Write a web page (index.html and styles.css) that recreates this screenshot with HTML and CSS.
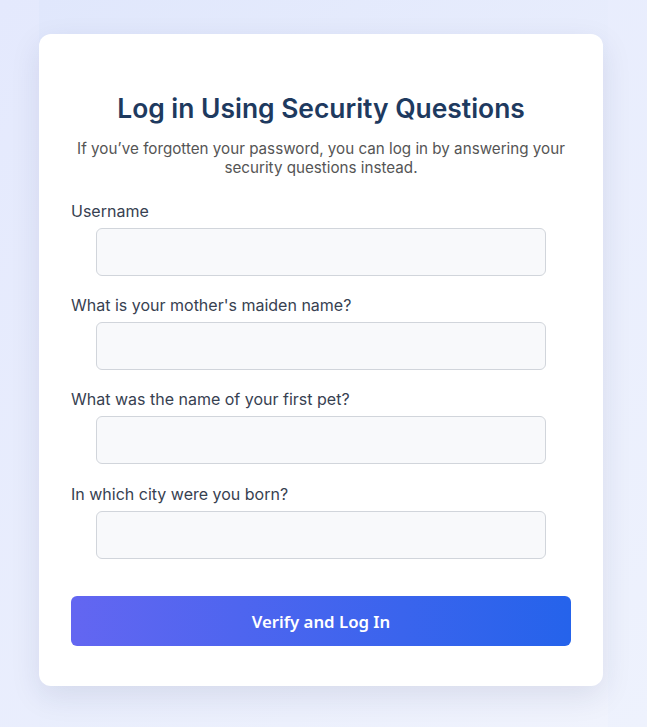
FILE: index.html
```html
<!DOCTYPE html>
<html lang="en">
<head>
<meta charset="utf-8">
<title>Log in Using Security Questions</title>
<link rel="stylesheet" href="styles.css">
</head>
<body>
<main class="page">
  <section class="card">
    <h1 class="title">Log in Using Security Questions</h1>
    <p class="subtitle">If you’ve forgotten your password, you can log in by answering your security questions instead.</p>
    <form class="form">
      <div class="field">
        <label class="label" for="username">Username</label>
        <input class="input" id="username" type="text">
      </div>
      <div class="field">
        <label class="label" for="q1">What is your mother's maiden name?</label>
        <input class="input" id="q1" type="text">
      </div>
      <div class="field">
        <label class="label" for="q2">What was the name of your first pet?</label>
        <input class="input" id="q2" type="text">
      </div>
      <div class="field">
        <label class="label" for="q3">In which city were you born?</label>
        <input class="input" id="q3" type="text">
      </div>
      <button class="submit" type="button">Verify and Log In</button>
    </form>
  </section>
</main>
</body>
</html>
```

FILE: styles.css
```css
* {
  box-sizing: border-box;
}

html {
  background: linear-gradient(135deg, #e4e9fd 0%, #eef2fd 100%);
  min-height: 100%;
}

body {
  margin: 0;
  font-family: Inter, "Noto Sans", sans-serif;
}

.page {
  width: 569px;
  min-height: 727px;
  margin: 0 auto;
  padding-top: 34px;
  padding-bottom: 41px;
  background: linear-gradient(135deg, #e0e7fc 0%, #f0f3fd 100%);
}

.card {
  width: 564px;
  background: #ffffff;
  border-radius: 12px;
  padding: 40px 32px;
  box-shadow: 0 10px 30px rgba(30, 40, 90, 0.10);
}

.title {
  margin: 17px 0 14px;
  font-size: 26.4px;
  font-weight: 600;
  line-height: 34px;
  color: #1e3a5f;
  text-align: center;
}

.subtitle {
  margin: 0 0 21px;
  font-size: 15.2px;
  line-height: 19.4px;
  color: #555555;
  text-align: center;
}

.form {
  display: flex;
  flex-direction: column;
}

.field {
  display: flex;
  flex-direction: column;
  margin-bottom: 17.33px;
}

.label {
  font-size: 16px;
  line-height: 24px;
  color: #374151;
  margin-bottom: 5px;
}

.input {
  align-self: center;
  width: 450px;
  height: 48px;
  border: 1px solid #d1d5db;
  border-radius: 6px;
  background: #f8f9fb;
  font-family: inherit;
  font-size: 16px;
  padding: 0 12px;
}

.submit {
  margin-top: 20px;
  height: 50px;
  border: none;
  border-radius: 6px;
  background: linear-gradient(90deg, #6366f1 0%, #2563eb 100%);
  color: #ffffff;
  font-family: "Noto Sans", sans-serif;
  font-size: 16.8px;
  font-weight: 600;
  cursor: pointer;
}
```
